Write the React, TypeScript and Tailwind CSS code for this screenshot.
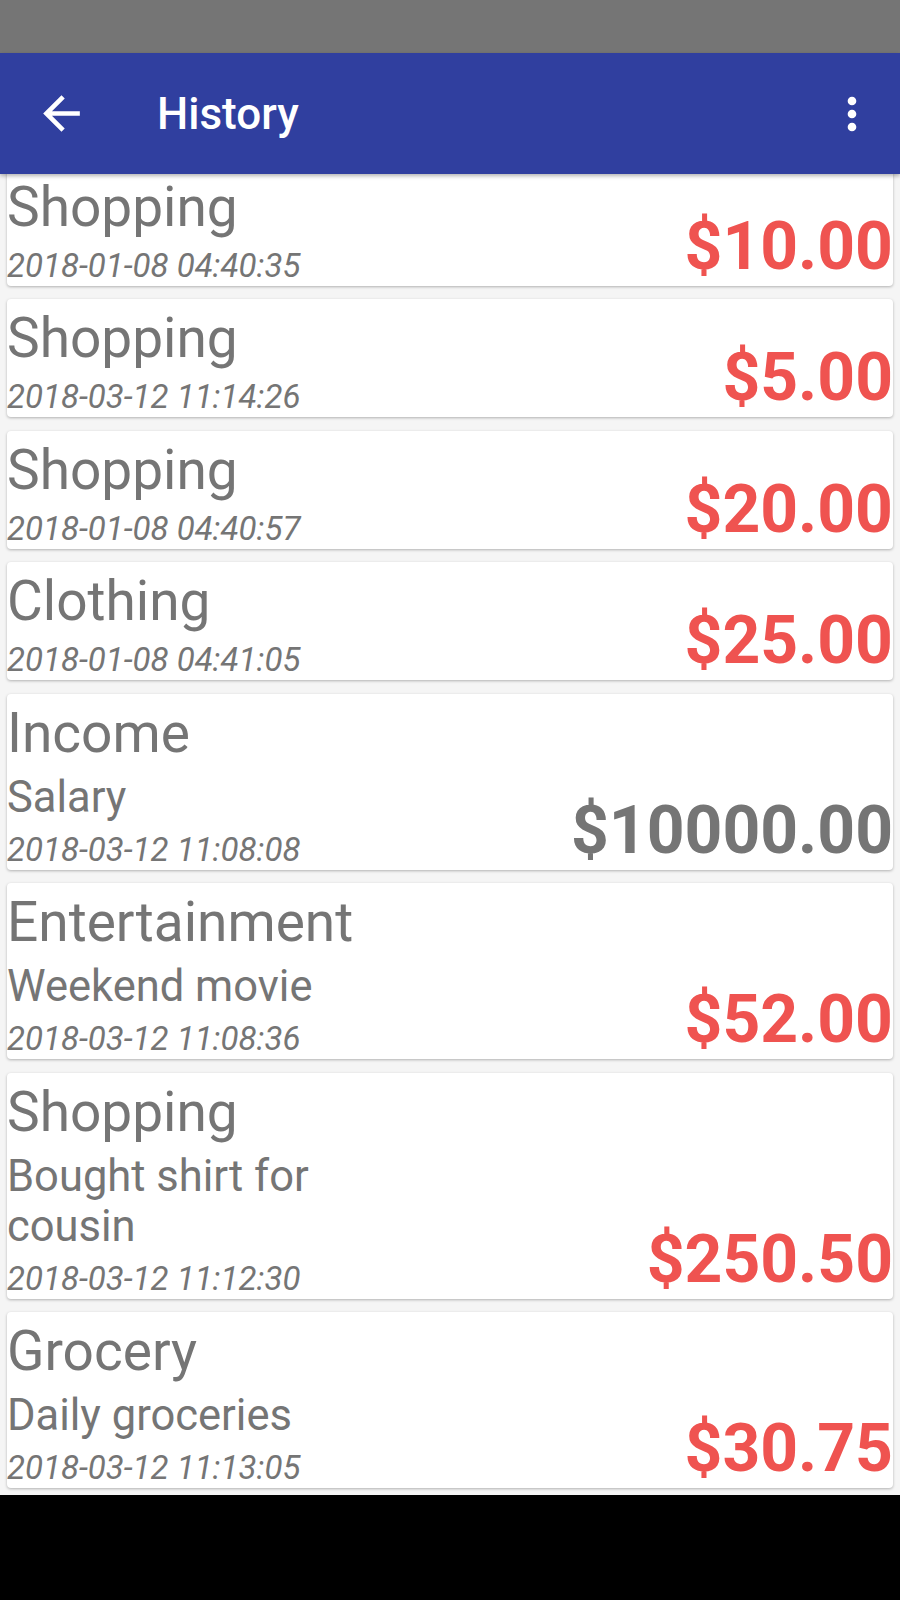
type Entry = {
  category: string;
  note?: string;
  date: string;
  amount: string;
  income?: boolean;
};

const entries: Entry[] = [
  { category: "Shopping", date: "2018-01-08 04:40:35", amount: "$10.00" },
  { category: "Shopping", date: "2018-03-12 11:14:26", amount: "$5.00" },
  { category: "Shopping", date: "2018-01-08 04:40:57", amount: "$20.00" },
  { category: "Clothing", date: "2018-01-08 04:41:05", amount: "$25.00" },
  { category: "Income", note: "Salary", date: "2018-03-12 11:08:08", amount: "$10000.00", income: true },
  { category: "Entertainment", note: "Weekend movie", date: "2018-03-12 11:08:36", amount: "$52.00" },
  { category: "Shopping", note: "Bought shirt for cousin", date: "2018-03-12 11:12:30", amount: "$250.50" },
  { category: "Grocery", note: "Daily groceries", date: "2018-03-12 11:13:05", amount: "$30.75" },
];

function HistoryCard({ entry }: { entry: Entry }) {
  return (
    <div className="bg-white rounded-[4px] shadow-[0_1px_3px_rgba(0,0,0,0.28)] flex items-end justify-between pt-2 pb-px">
      <div className="flex flex-col w-[400px] text-[#757575]">
        <div className="text-[55px] leading-[63px]">{entry.category}</div>
        {entry.note && <div className="mt-2 text-[43.5px] leading-[50px]">{entry.note}</div>}
        <div className="mt-2 text-[33px] leading-[38px] italic">{entry.date}</div>
      </div>
      <div
        className={
          "text-[66px] leading-[77px] font-bold whitespace-nowrap " +
          (entry.income ? "text-[#757575]" : "text-[#ef5350]")
        }
      >
        {entry.amount}
      </div>
    </div>
  );
}

export default function App() {
  return (
    <div className="w-[900px] h-[1600px] flex flex-col bg-black font-['Roboto',sans-serif]">
      {/* status bar */}
      <div className="h-[53px] bg-[#757575]" />

      <header className="relative z-10 h-[121px] bg-[#303f9f] flex items-center shadow-[0_2px_4px_rgba(0,0,0,0.3)]">
        <svg viewBox="0 0 24 24" className="ml-[34px] w-[55px] h-[55px]" fill="#ffffff">
          <path d="M20 11H7.83l5.59-5.59L12 4l-8 8 8 8 1.41-1.41L7.83 13H20v-2z" />
        </svg>
        <h1 className="ml-[68px] text-white text-[44px] font-medium leading-none">History</h1>
        <svg viewBox="0 0 24 24" className="ml-auto mr-[22px] w-[52px] h-[52px]" fill="#ffffff">
          <path d="M12 8c1.1 0 2-.9 2-2s-.9-2-2-2-2 .9-2 2 .9 2 2 2zm0 2c-1.1 0-2 .9-2 2s.9 2 2 2 2-.9 2-2-.9-2-2-2zm0 6c-1.1 0-2 .9-2 2s.9 2 2 2 2-.9 2-2-.9-2-2-2z" />
        </svg>
      </header>

      <main className="h-[1321px] bg-[#f5f5f5] overflow-hidden">
        <div className="-mt-[6.5px] flex flex-col gap-[13.5px] px-[7px]">
          {entries.map((e, i) => (
            <HistoryCard key={i} entry={e} />
          ))}
        </div>
      </main>

      {/* nav bar */}
      <div className="flex-1 bg-black" />
    </div>
  );
}
